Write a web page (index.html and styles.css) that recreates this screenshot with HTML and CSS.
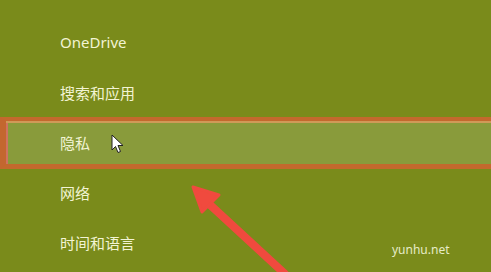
FILE: index.html
```html
<!DOCTYPE html>
<html lang="zh">
<head>
<meta charset="utf-8">
<link rel="stylesheet" href="styles.css">
</head>
<body>
<div class="page">
  <ul class="menu">
    <li class="item">OneDrive</li>
    <li class="item">搜索和应用</li>
    <li class="item active">隐私</li>
    <li class="item">网络</li>
    <li class="item">时间和语言</li>
  </ul>
  <svg class="cursor" width="14" height="20" viewBox="0 0 14 20">
    <path d="M1 1 L1 16 L4.5 12.5 L7 18.5 L9.5 17.5 L7 11.5 L12 11.5 Z" fill="#ffffff" stroke="#222" stroke-width="1" stroke-linejoin="round"/>
  </svg>
  <svg class="arrow" width="130" height="100" viewBox="0 0 130 100">
    <path d="M102 100 L24 28" stroke="#f04a3e" stroke-width="8" stroke-linecap="round" fill="none"/>
    <path d="M10 13 L36 21 L19 38 Z" fill="#f04a3e" stroke="#f04a3e" stroke-width="3" stroke-linejoin="round"/>
  </svg>
  <div class="mark">yunhu.net</div>
</div>
</body>
</html>
```
FILE: styles.css
```css
html, body {
  margin: 0;
  padding: 0;
}
body {
  background: #7a8b1b;
  width: 491px;
  height: 272px;
  overflow: hidden;
}
.page {
  position: relative;
  width: 491px;
  height: 272px;
}
.menu {
  list-style: none;
  margin: 0;
  padding: 17px 0 0 0;
}
.item {
  box-sizing: border-box;
  height: 50px;
  display: flex;
  align-items: center;
  padding-left: 60px;
  font-family: "Noto Sans", "Noto Sans CJK SC", sans-serif;
  font-size: 15px;
  color: #f2f4d4;
}
.item.active {
  background: #899b3b;
  border-top: 4px solid #c3692d;
  border-bottom: 5px solid #c3692d;
  border-left: 6px solid #c3672f;
  padding-left: 54px;
  box-shadow: inset 0 2px 0 #cf9a58, inset 2px 0 0 #d07260;
  margin-top: 0;
  height: 52px;
  margin-bottom: -2px;
}
.cursor {
  position: absolute;
  left: 111px;
  top: 134px;
}
.arrow {
  position: absolute;
  left: 183px;
  top: 174px;
}
.mark {
  position: absolute;
  left: 392px;
  top: 241px;
  font-family: "Noto Sans", sans-serif;
  font-size: 12px;
  color: #e6ecc8;
}
```
